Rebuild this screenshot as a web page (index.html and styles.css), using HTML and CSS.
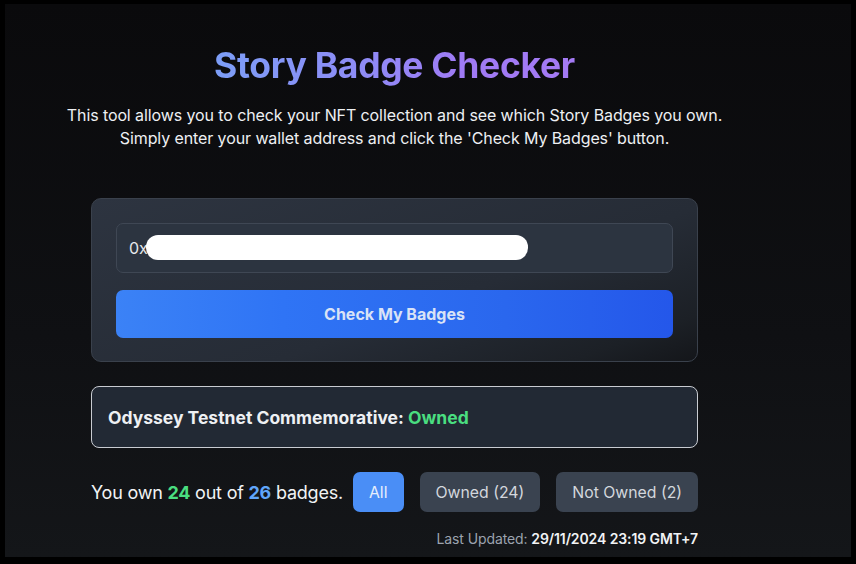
FILE: index.html
```html
<!DOCTYPE html>
<html>
<head>
<meta charset="utf-8">
<link rel="stylesheet" href="styles.css">
</head>
<body>
<div class="screen">
  <main class="wrap">
    <h1 class="title">Story Badge Checker</h1>
    <p class="intro">This tool allows you to check your NFT collection and see which Story Badges you own.<br>Simply enter your wallet address and click the 'Check My Badges' button.</p>
    <section class="card">
      <div class="field">
        <span class="addr">0x</span>
        <span class="redact"></span>
      </div>
      <button class="check">Check My Badges</button>
    </section>
    <div class="special"><span>Odyssey Testnet Commemorative: <span class="green">Owned</span></span></div>
    <div class="summary">
      <span class="count">You own <b class="green">24</b> out of <b class="blue">26</b> badges.</span>
      <button class="tab active">All</button>
      <button class="tab">Owned (24)</button>
      <button class="tab">Not Owned (2)</button>
    </div>
    <div class="updated"><span class="muted">Last Updated:</span> <b>29/11/2024 23:19 GMT+7</b></div>
  </main>
</div>
</body>
</html>
```

FILE: styles.css
```css
html, body {
  margin: 0;
  padding: 0;
  background: #000;
}
body {
  font-family: Inter, "Noto Sans", sans-serif;
  color: #e5e7eb;
}
.screen {
  margin: 4px 5px 0 5px;
  height: 553px;
  background: linear-gradient(180deg, #0a0a0c 0%, #0f1013 60%, #141619 100%);
  overflow: hidden;
}
.wrap {
  width: 607px;
  margin-left: 86px;
  padding-top: 41px;
  display: flex;
  flex-direction: column;
}
.title {
  margin: 0;
  text-align: center;
  font-size: 35.5px;
  font-weight: 700;
  line-height: 42px;
  letter-spacing: -0.3px;
  background: linear-gradient(90deg, #7c9ef7 0%, #8e8cf6 40%, #a07af5 70%, #a47af4 100%);
  -webkit-background-clip: text;
  background-clip: text;
  color: transparent;
  width: 366px;
  align-self: center;
}
.intro {
  margin: 17px -60px 0;
  text-align: center;
  font-size: 16px;
  line-height: 23px;
  color: #eef0f3;
  letter-spacing: -0.1px;
}
.card {
  margin-top: 48px;
  height: 164px;
  box-sizing: border-box;
  border: 1px solid #3a414c;
  border-radius: 10px;
  background: linear-gradient(160deg, #2d3440 0%, #262c36 60%, #1c2026 88%, #14161a 100%);
  padding: 24px 24px;
  display: flex;
  flex-direction: column;
  gap: 17px;
}
.field {
  position: relative;
  height: 50px;
  flex: 0 0 50px;
  box-sizing: border-box;
  border: 1px solid #3f4754;
  border-radius: 7px;
  background: #2c3440;
  display: flex;
  align-items: center;
  padding-left: 12px;
  font-size: 16px;
  color: #e5e7eb;
}
.redact {
  position: absolute;
  left: 29px;
  top: 11px;
  width: 382px;
  height: 25px;
  background: #fff;
  border-radius: 12px;
}
.check {
  height: 48px;
  flex: 0 0 48px;
  border: 0;
  border-radius: 7px;
  background: linear-gradient(90deg, #3b82f6 0%, #2f74f5 30%, #2a67ee 70%, #2457ea 100%);
  color: #d9e3f6;
  font-family: inherit;
  font-size: 16px;
  font-weight: 700;
}
.special {
  margin-top: 24px;
  height: 62px;
  box-sizing: border-box;
  border: 1px solid #c9ccd2;
  border-radius: 8px;
  background: #222934;
  display: flex;
  align-items: center;
  padding-left: 16px;
  font-size: 17.5px;
  font-weight: 700;
  color: #eef0f3;
}
.green { color: #4ade80; }
.blue { color: #60a5fa; }
.summary {
  margin-top: 24px;
  display: flex;
  align-items: center;
  gap: 16px;
  white-space: nowrap;
}
.count {
  font-size: 18px;
  letter-spacing: -0.22px;
  color: #f1f3f5;
  margin-right: -6px;
  flex-shrink: 0;
}
.count b { font-weight: 700; }
.tab {
  height: 40px;
  flex-shrink: 0;
  border: 0;
  border-radius: 7px;
  background: #3a4350;
  color: #d3d7dd;
  font-family: inherit;
  font-size: 15.8px;
  padding: 0 16px;
  white-space: nowrap;
}
.tab.active {
  background: #4a8ef6;
  color: #e6eefc;
}
.updated {
  margin-top: 18px;
  text-align: right;
  font-size: 14px;
  letter-spacing: -0.1px;
  color: #f1f3f5;
}
.updated b { font-weight: 600; }
.muted { color: #9ca3af; }
```
